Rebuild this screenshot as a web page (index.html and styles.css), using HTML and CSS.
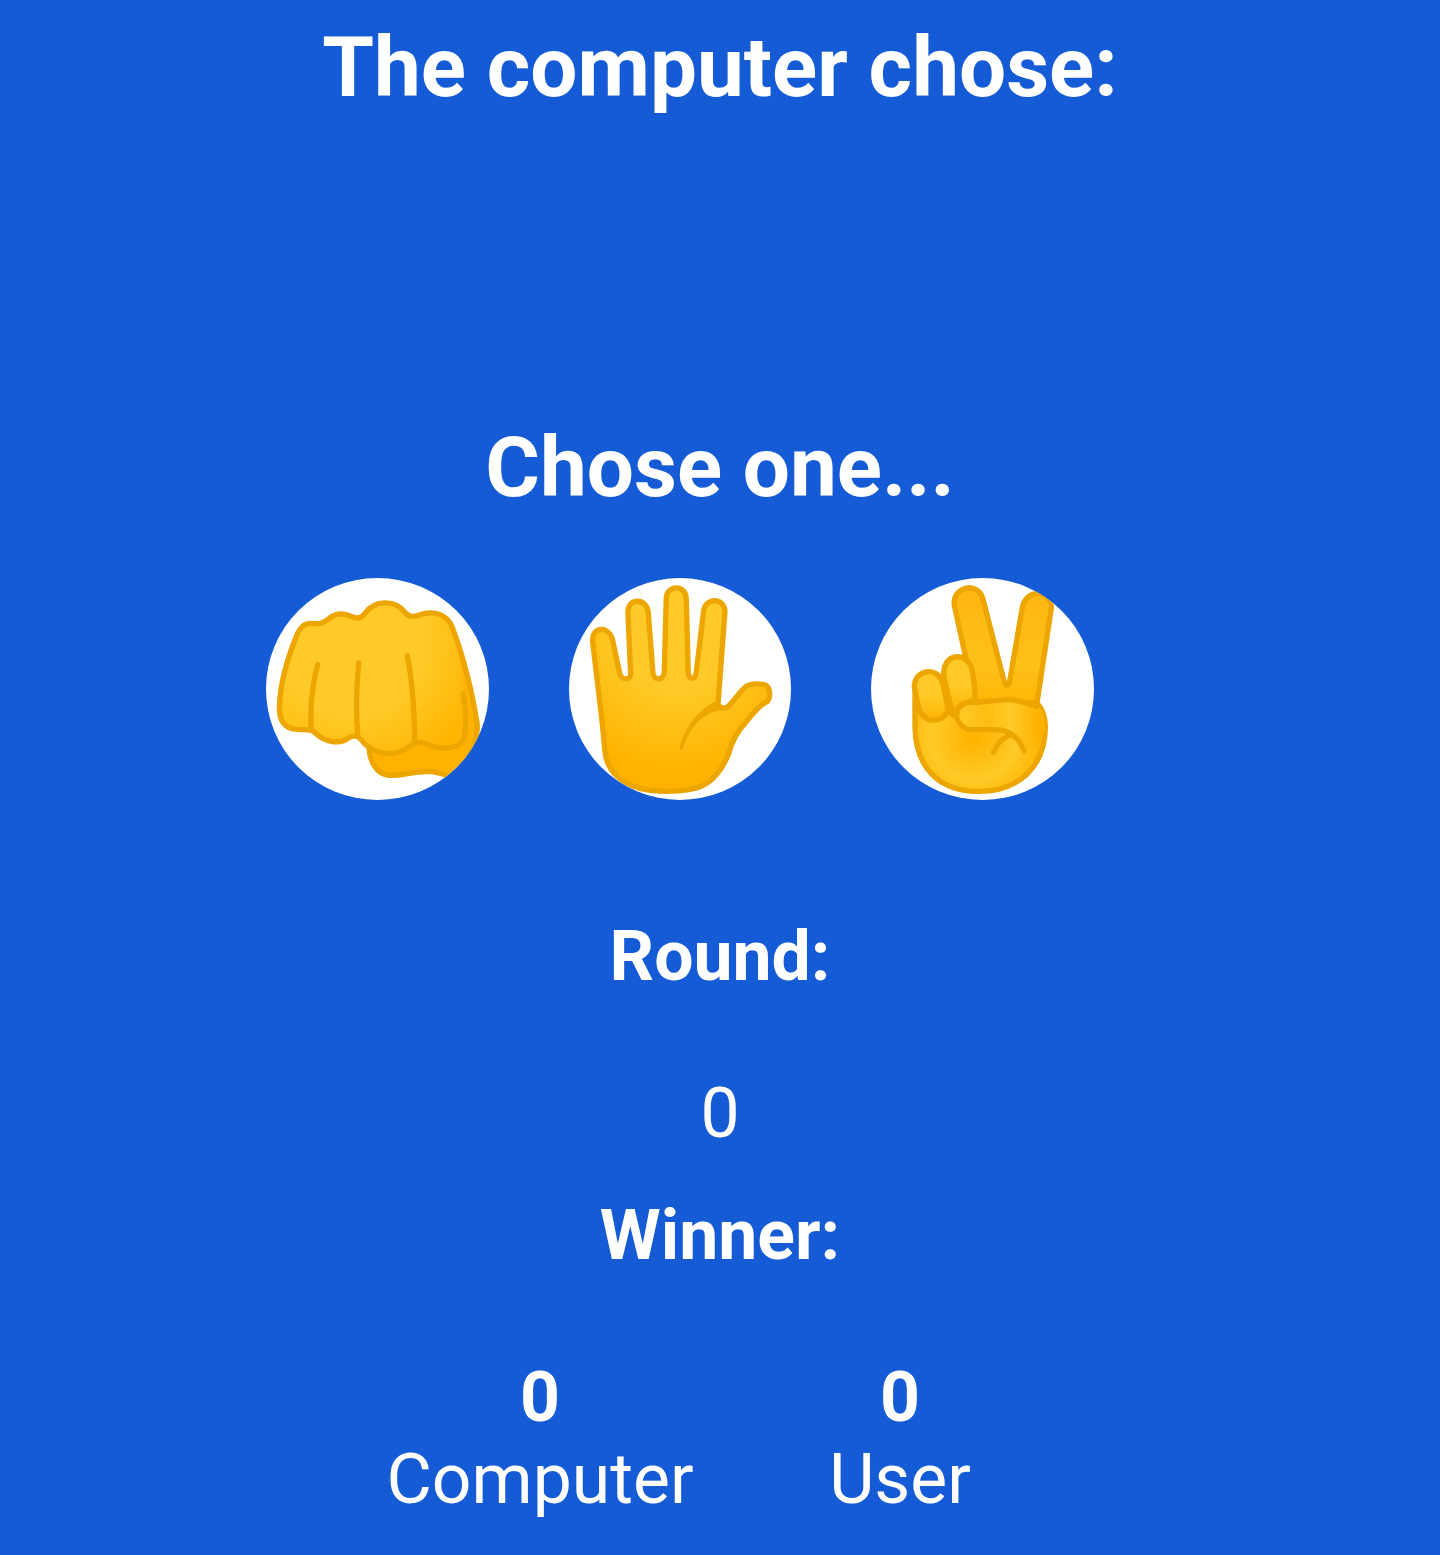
FILE: index.html
```html
<!DOCTYPE html>
<html lang="en">
<head>
<meta charset="utf-8">
<title>Rock Paper Scissors</title>
<link rel="stylesheet" href="styles.css">
</head>
<body>
<main class="game">
  <section class="computer-choice">
    <h1 class="heading">The computer chose:</h1>
  </section>
  <section class="player-choice">
    <h1 class="heading">Chose one...</h1>
    <div class="choices">
      <button class="choice" aria-label="Rock">
        <svg class="hand" viewBox="18 22 667.5 666">
          <defs>
            <radialGradient id="rock" gradientUnits="userSpaceOnUse" cx="270" cy="210" r="450">
              <stop offset=".5" stop-color="#ffca28"/><stop offset=".92" stop-color="#ffb502"/>
            </radialGradient>
          </defs>
          <path class="line" fill="#ffb300" d="M327 520C326 570 349 611 388 614C435 617 455 599 516 603Q550 608 574 621C635 568 656 510 650 453L600 350Z"/>
          <path fill="url(#rock)" d="M184 159C150 155 128 159 111 192C85 255 61 330 58 408C57 456 79 475 110 476C140 479 153 472 168 489C193 513 239 525 270 499C296 490 299 504 318 523C350 551 406 561 446 529C466 516 472 509 501 521C546 538 597 538 614 498C636 520 653 503 650 460C643 380 611 252 574 163C557 132 526 120 487 130C466 137 450 144 434 124C404 86 343 88 316 127C296 147 287 147 270 136C245 126 224 129 205 145Z"/>
          <path fill="#ffb300" d="M600 250Q645 380 650 465Q646 520 612 565L540 538Q605 537 615 492Q622 400 600 250Z"/>
          <path class="line" fill="none" d="M573 622C635 568 656 510 650 453C640 379 609 250 574 163C557 132 526 120 487 130C466 137 450 144 434 124C404 86 343 88 316 127C300 147 289 144 270 136C245 125 224 129 205 145C178 168 163 155 145 159C129 160 119 174 111 192C85 255 61 330 58 408C57 456 79 475 110 476C140 479 153 472 168 489C193 513 239 525 270 499C296 490 299 504 318 523C350 551 406 561 446 529C466 516 472 509 501 521C557 544 608 532 615 492Q621 430 609 369M173 282Q149 370 153 474M296 277Q285 385 293 493M442 255Q463 360 464 515"/>
        </svg>
      </button>
      <button class="choice" aria-label="Paper">
        <svg class="hand" viewBox="26.25 22 667.5 666">
          <defs>
            <radialGradient id="paper" gradientUnits="userSpaceOnUse" cx="350" cy="200" r="450">
              <stop offset=".35" stop-color="#ffca28"/><stop offset=".9" stop-color="#ffb300"/>
            </radialGradient>
          </defs>
          <path class="line" fill="url(#paper)" d="M97 212C94 169 143 163 156 204L178 306C183 332 215 330 211 305L203 127C201 78 262 82 264 127L278 305C281 332 309 330 312 306L318 84C319 40 378 41 378 85L384 305C386 330 405 327 408 305L430 121C437 76 496 82 494 125L473 403C483 413 493 418 506 405C523 387 539 363 557 348C571 337 609 338 619 345C631 356 631 381 622 392C603 398 583 423 563 447C529 484 511 523 505 550C484 599 456 637 414 650C369 664 292 666 239 653C177 637 138 595 134 541Q126 450 116 372Z"/>
          <path fill="#eda600" d="M470 390C427 409 372 462 358 535Q363 543 368 534C385 474 430 424 483 418Q494 413 489 408Q479 407 470 390Z"/>
        </svg>
      </button>
      <button class="choice" aria-label="Scissors">
        <svg class="hand" viewBox="18 22 667.5 666">
          <defs>
            <linearGradient id="fingers" x2="0" y2="1">
              <stop stop-color="#ffb610"/><stop offset=".62" stop-color="#ffc01a"/><stop offset="1" stop-color="#ffb300"/>
            </linearGradient>
            <radialGradient id="palm" gradientUnits="userSpaceOnUse" cx="325" cy="500" r="215">
              <stop offset=".05" stop-color="#ffb300"/><stop offset=".6" stop-color="#ffca28"/><stop offset=".95" stop-color="#ffb504"/>
            </radialGradient>
            <linearGradient id="curled" x2="0" y2="1">
              <stop offset=".5" stop-color="#ffca28"/><stop offset="1" stop-color="#ffb300"/>
            </linearGradient>
            <linearGradient id="thumb" gradientUnits="userSpaceOnUse" x1="280" y1="440" x2="540" y2="440">
              <stop stop-color="#ffca28"/><stop offset=".33" stop-color="#ffbd12"/><stop offset=".6" stop-color="#ffca28"/><stop offset=".92" stop-color="#ffb300"/>
            </linearGradient>
          </defs>
          <path class="line" fill="url(#fingers)" d="M318 332L269 109C255 51 336 28 353 82L419 338Q426 350 433 338L472 110C485 46 568 62 558 119L515 403L335 430Z"/>
          <path class="line" fill="url(#palm)" d="M150 362L150 470C152 590 221 662 340 662C460 662 541 590 541 467Q540 422 516 397L330 392Z"/>
          <path fill="url(#thumb)" d="M277 440Q279 400 306 397L428 386Q490 398 520 405Q541 430 540 475Q525 530 478 541Q462 505 435 493Q410 470 308 477Z"/>
          <path class="line" fill="url(#curled)" d="M237 320C228 244 309 240 321 298Q329 335 331 390Q281 394 275 428C257 420 253 392 248 367Z"/>
          <path class="line" fill="url(#curled)" d="M148 349C147 295 216 287 232 332L247 405C251 433 232 448 205 449C177 448 160 423 157 391Z"/>
          <path class="line" fill="none" d="M515 408C486 398 455 385 422 387L326 396C290 391 273 410 275 441Q285 470 312 477L393 477C440 479 460 502 478 541M275 441L256 425M436 493C405 506 397 520 385 545"/>
        </svg>
      </button>
    </div>
  </section>
  <section class="results">
    <h2 class="label">Round:</h2>
    <p class="round">0</p>
    <h2 class="label">Winner:</h2>
    <div class="scores">
      <div class="score"><strong>0</strong><span>Computer</span></div>
      <div class="score"><strong>0</strong><span>User</span></div>
    </div>
  </section>
</main>
</body>
</html>
```
FILE: styles.css
```css
* { box-sizing: border-box; }
body {
  margin: 0;
  background: #155bd5;
  color: #fff;
  font: 69.68px/82px Roboto, sans-serif;
  text-align: center;
}
.game {
  display: flex;
  flex-direction: column;
  min-height: 1555px;
  padding-top: 18px;
}
.computer-choice { height: 400px; }
.heading { margin: 0; font-size: 83.6px; line-height: 98px; font-weight: 700; }
.player-choice { height: 497px; }
.choices {
  display: flex;
  justify-content: center;
  margin-top: 62px;
}
.choice {
  flex: none;
  width: 222.5px;
  height: 222px;
  margin: 0 80px 0 0;
  padding: 0;
  border: 0;
  border-radius: 50%;
  background: #fff;
  overflow: hidden;
}
.hand { display: block; width: 100%; height: 100%; }
.line {
  stroke: #eda600;
  stroke-width: 16;
  stroke-linecap: round;
  stroke-linejoin: round;
}
.label { margin: 0; font-size: 1em; font-weight: 700; }
.round { margin: 75px 0 40px; }
.scores { display: flex; justify-content: center; margin-top: 80px; }
.score { display: flex; flex-direction: column; width: 360px; }
```
